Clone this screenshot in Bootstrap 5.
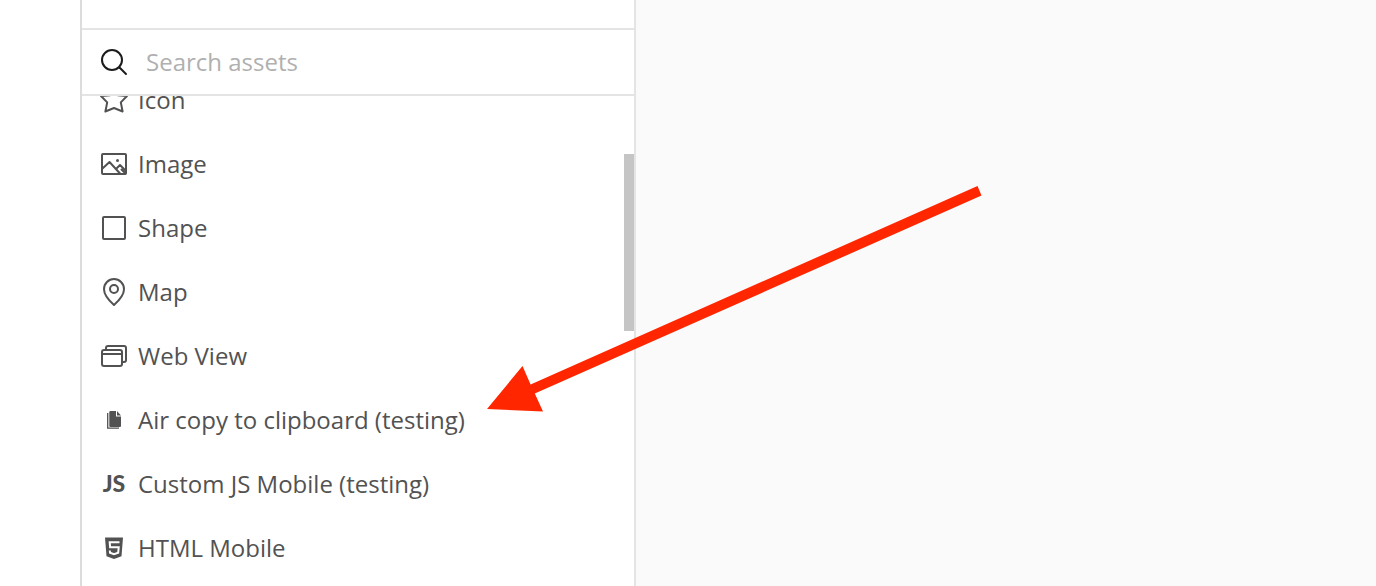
<!DOCTYPE html>
<html lang="en">
<head>
<meta charset="utf-8">
<meta name="viewport" content="width=device-width, initial-scale=1">
<title>Assets</title>
<link href="https://cdn.jsdelivr.net/npm/bootstrap@5.3.0/dist/css/bootstrap.min.css" rel="stylesheet">
<style>
  body { font-family: "Open Sans", sans-serif; font-size: 24px; line-height: 32px; color: #525252; background: #fff; }
  .rail { width: 80px; }
  .panel { width: 556px; border: solid #e4e4e4; border-width: 0 2px; border-left-color: #dcdcdc; }
  .panel-top { height: 28px; }
  .search-bar { height: 68px; padding: 0 18px; gap: 14px; border: solid #e4e4e4; border-width: 2px 0; }
  .search-bar .form-control { font-size: 24px; line-height: 32px; color: #525252; padding: 0 4px; box-shadow: none; }
  .search-bar .form-control::placeholder { color: #b0b0b0; opacity: 1; }
  .assets { margin-top: -28px; }
  .asset { height: 64px; padding: 0 18px; gap: 10px; color: inherit; }
  .glyph { width: 28px; height: 28px; flex: none; fill: none; stroke: #525252; stroke-width: 2; stroke-linejoin: round; stroke-linecap: round; }
  .glyph .solid { fill: #525252; stroke: none; }
  .search-glyph { stroke: #1c1c1c; }
  .thumb { top: 58px; right: 0; width: 10px; height: 177px; background: #c5c5c5; }
  .canvas { background: #fafafa; }
  .pointer { left: 487px; top: 186px; width: 495px; height: 226px; pointer-events: none; }
</style>
</head>
<body>
<div class="d-flex vh-100 overflow-hidden position-relative">
  <div class="rail flex-shrink-0"></div>
  <aside class="panel flex-shrink-0 d-flex flex-column">
    <div class="panel-top flex-shrink-0"></div>
    <label class="search-bar flex-shrink-0 d-flex align-items-center">
      <svg class="glyph search-glyph" viewBox="0 0 28 28" aria-hidden="true"><circle cx="12" cy="12" r="10"/><path d="M19.500 19.500 26 26"/></svg>
      <input type="search" class="form-control border-0 bg-transparent" placeholder="Search assets" aria-label="Search assets">
    </label>
    <div class="flex-grow-1 overflow-hidden position-relative">
      <nav class="assets d-flex flex-column" aria-label="Assets">
        <a href="#" class="asset d-flex align-items-center text-decoration-none">
          <svg class="glyph" viewBox="0 0 28 28" aria-hidden="true"><path d="m14 1.500 4 7.700 9 .8-6.200 6.400 1.800 9.100L14 22l-8.600 3.500 1.800-9.100L1 10 10 9.200Z"/></svg>
          <span>Icon</span></a>
        <a href="#" class="asset d-flex align-items-center text-decoration-none">
          <svg class="glyph" viewBox="0 0 28 28" aria-hidden="true"><rect x="2" y="4" width="24" height="20" rx="1"/><path d="m2.500 18.500 7-6.500L20 23.500M16.500 18.500l3.500-3.500 6 6M21.500 19.500l4 4"/><circle class="solid" cx="17.500" cy="10.500" r="1.500"/></svg>
          <span>Image</span></a>
        <a href="#" class="asset d-flex align-items-center text-decoration-none">
          <svg class="glyph" viewBox="0 0 28 28" aria-hidden="true"><rect x="3" y="3" width="22" height="22" rx="1"/></svg>
          <span>Shape</span></a>
        <a href="#" class="asset d-flex align-items-center text-decoration-none">
          <svg class="glyph" viewBox="0 0 28 28" aria-hidden="true"><path d="M14 27C9 22.500 4 17 4 11.200A10 10.200 0 0 1 24 11.200C24 17 19 22.500 14 27Z"/><circle cx="14" cy="11" r="4"/></svg>
          <span>Map</span></a>
        <a href="#" class="asset d-flex align-items-center text-decoration-none">
          <svg class="glyph" viewBox="0 0 28 28" aria-hidden="true"><rect x="2" y="8" width="20" height="16" rx="2"/><path d="M2 12h20M6 7.500V6q0-2 2-2h16q2 0 2 2v12q0 2-2 2h-1.500"/></svg>
          <span>Web View</span></a>
        <a href="#" class="asset d-flex align-items-center text-decoration-none">
          <svg class="glyph" viewBox="0 0 28 28" aria-hidden="true"><path class="solid" d="M10.500 5H16v5.500h5V20q0 1-1 1h-9.500q-1.200 0-1.200-1V6q0-1 1.200-1ZM17 5l4 4.500h-4Z"/><path d="M7.700 7v15.200h11.300" stroke-width="1.300" stroke-linecap="butt" stroke-linejoin="miter"/></svg>
          <span>Air copy to clipboard (testing)</span></a>
        <a href="#" class="asset d-flex align-items-center text-decoration-none">
          <svg class="glyph" viewBox="0 0 28 28" aria-hidden="true"><text class="solid" x="14" y="22" text-anchor="middle" font-family="Lato, sans-serif" font-weight="900" font-size="23">JS</text></svg>
          <span>Custom JS Mobile (testing)</span></a>
        <a href="#" class="asset d-flex align-items-center text-decoration-none">
          <svg class="glyph" viewBox="0 0 28 28" aria-hidden="true"><path class="solid" d="M5 3.500h18l-1.500 18.800L14 25l-7.500-2.700Z"/><path d="M19.500 8.200H9.700l.4 5h8.600l-.5 5.600L14 20.300l-4-1.500-.2-2.300" stroke="#fff" stroke-linecap="butt" stroke-linejoin="miter"/></svg>
          <span>HTML Mobile</span></a>
      </nav>
      <div class="thumb position-absolute"></div>
    </div>
  </aside>
  <main class="canvas flex-grow-1"></main>
  <svg class="pointer position-absolute" viewBox="0 0 495 226" aria-hidden="true"><path fill="#ff2600" d="M0 223 35.500 180 43.600 198.500 490.500 0 494.500 9.500 47.800 207.500 56 225.500Z"/></svg>
</div>
<script src="https://cdn.jsdelivr.net/npm/bootstrap@5.3.0/dist/js/bootstrap.bundle.min.js"></script>
</body>
</html>
